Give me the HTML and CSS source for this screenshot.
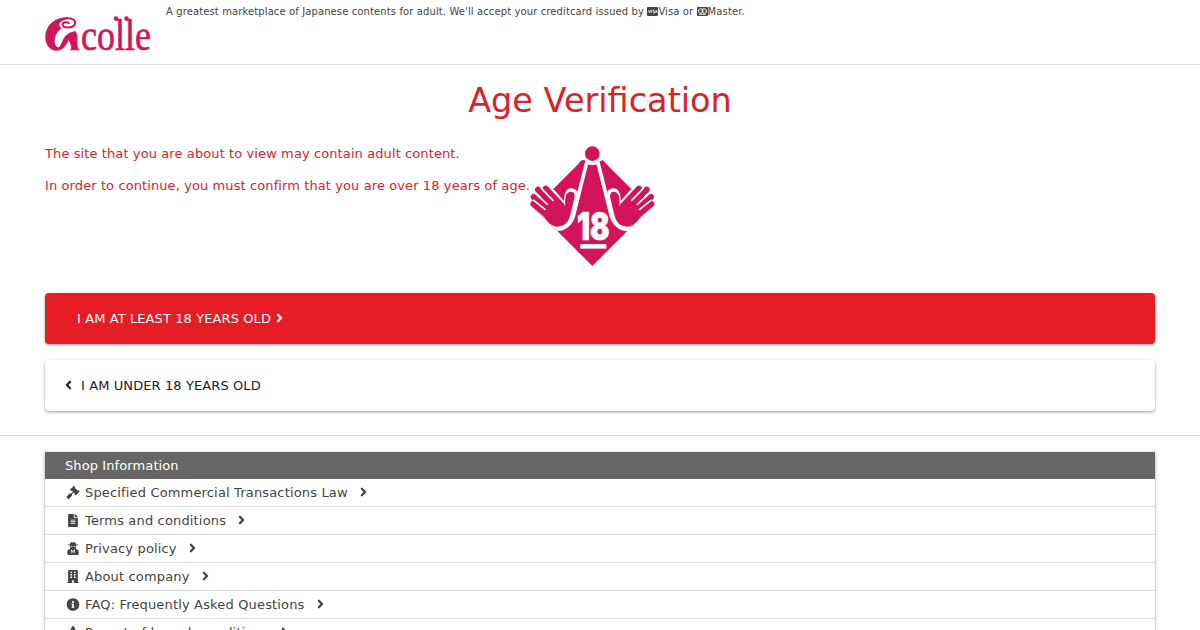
FILE: index.html
```html
<!DOCTYPE html>
<html lang="en">
<head>
    <meta charset="UTF-8">
    <meta name="viewport" content="width=device-width, initial-scale=1.0">
    <title>Age Verification</title>
    <link rel="stylesheet" href="styles.css">
</head>
<body>
    <svg class="defs" width="0" height="0">
        <symbol id="angle-right" viewBox="0 0 256 512">
            <path d="M224.3 273l-136 136c-9.4 9.4-24.6 9.4-33.9 0l-22.6-22.6c-9.4-9.4-9.4-24.6 0-33.9l96.4-96.4-96.4-96.4c-9.4-9.4-9.4-24.6 0-33.9L54.3 103c9.4-9.4 24.6-9.4 33.9 0l136 136c9.5 9.4 9.5 24.6.1 34z"/>
        </symbol>
    </svg>

    <header class="header">
        <div class="container header-inner">
            <a class="logo" href="#">
                <svg width="120" height="58" viewBox="0 -8 120 58">
                    <g transform="scale(.3333) translate(-15 -27)">
                        <path d="M84 37C40 36 16 66 16 96C16 120 30 137 50 137C68 137 76 124 86 106C90 114 94 122 94 130L89 136H120L115 130C108 118 118 96 107 79C90 80 76 90 69 104C62 118 60 129 53 127C41 120 42 100 50 86C54 78 60 74 66 70C50 62 58 46 84 43Z"/>
                        <path class="logo-swirl" d="M78 40C100 38 108 48 105 57C99 71 70 70 68 60C67 51 84 49 88 56"/>
                    </g>
                    <text x="36" y="36" textLength="70" lengthAdjust="spacingAndGlyphs">colle</text>
                    <circle cx="71" cy="4.500" r="2.200"/>
                    <circle cx="81.500" cy="4.500" r="2.200"/>
                </svg>
            </a>
            <p class="tagline">A greatest marketplace of Japanese contents for adult. We'll accept your creditcard issued by <svg class="card" viewBox="0 0 22 18"><rect width="22" height="18" rx="2"/><path class="card-line" d="M3 6l2 6 2-6M9 6v6M15 6h-3v3h3v3h-3M17 12l1.500-6 1.500 6"/></svg>Visa or <svg class="card" viewBox="0 0 22 18"><rect width="22" height="18" rx="2"/><circle class="card-ring" cx="7.500" cy="8" r="4.500"/><circle class="card-ring" cx="14.500" cy="8" r="4.500"/><path class="card-line" d="M4 15h14"/></svg>Master.</p>
        </div>
    </header>

    <main class="container">
        <h1 class="title">Age Verification</h1>
        <div class="notice">
            <div class="notice-text">
                <p>The site that you are about to view may contain adult content.</p>
                <p>In order to continue, you must confirm that you are over 18 years of age.</p>
            </div>
            <svg class="adult-mark" viewBox="30 15 375 369">
                <path class="pink" d="M217 30L391 204L217 378L43 204Z"/>
                <path class="white" d="M180 10H254V66L234 73L217 76L200 73L193 60L180 63Z"/>
                <circle class="pink" cx="217" cy="41" r="22"/>
                <path class="pink" d="M190 75L197 69Q194 60 185 61L175 71ZM244 75L237 69Q240 60 249 61L259 71Z"/>
                <g id="hand">
                    <path class="white" d="M20 120L103 150L132 183Q132 143 156 145Q166 146 172 154L165 212C158 250 142 273 112 273L43 204Z"/>
                    <path class="outline" d="M200 68L160 228Q148 264 117 265"/>
                    <path class="pink" d="M85 165L136 197Q132 155 153 155Q167 156 163 175L152 220Q145 260 111 260Q94 259 81 242L50 202L65 165Z"/>
                    <path class="finger" d="M40 192L82 227M41 171L90 216M54 149L108 203M77 146L124 196"/>
                    <path class="gap" d="M41 181L75 208M45 159L82 193M64 145L99 181"/>
                </g>
                <use href="#hand" transform="matrix(-1 0 0 1 434 0)"/>
                <text class="eighteen" x="171" y="301" textLength="98" lengthAdjust="spacingAndGlyphs">18</text>
                <path class="white" d="M181 312H259V326H181Z"/>
            </svg>
        </div>
        <a class="button button-enter" href="#">I AM AT LEAST 18 YEARS OLD <svg class="angle"><use href="#angle-right"/></svg></a>
        <a class="button button-leave" href="#"><svg class="angle angle-left"><use href="#angle-right"/></svg>I AM UNDER 18 YEARS OLD</a>
    </main>

    <footer class="footer">
        <div class="container">
            <div class="shop">
                <h2 class="shop-title">Shop Information</h2>
                <ul class="shop-list">
                    <li><svg class="icon" viewBox="0 0 512 512"><path d="M504.971 199.362l-22.627-22.627c-9.373-9.373-24.569-9.373-33.941 0l-5.657 5.657L329.608 69.255l5.657-5.657c9.373-9.373 9.373-24.569 0-33.941L312.638 7.029c-9.373-9.373-24.569-9.373-33.941 0L154.246 131.480c-9.373 9.373-9.373 24.569 0 33.941l22.627 22.627c9.373 9.373 24.569 9.373 33.941 0l5.657-5.657 39.598 39.598-81.040 81.040-5.657-5.657c-12.497-12.497-32.758-12.497-45.255 0L9.373 412.118c-12.497 12.497-12.497 32.758 0 45.255l45.255 45.255c12.497 12.497 32.758 12.497 45.255 0l114.745-114.745c12.497-12.497 12.497-32.758 0-45.255l-5.657-5.657 81.040-81.040 39.598 39.598-5.657 5.657c-9.373 9.373-9.373 24.569 0 33.941l22.627 22.627c9.373 9.373 24.569 9.373 33.941 0l124.451-124.451c9.372-9.372 9.372-24.568 0-33.941z"/></svg>Specified Commercial Transactions Law<svg class="angle"><use href="#angle-right"/></svg></li>
                    <li><svg class="icon" viewBox="0 0 384 512"><path d="M224 136V0H24C10.700 0 0 10.700 0 24v464c0 13.300 10.700 24 24 24h336c13.300 0 24-10.700 24-24V160H248c-13.200 0-24-10.800-24-24zm64 236c0 6.600-5.400 12-12 12H108c-6.600 0-12-5.400-12-12v-8c0-6.600 5.400-12 12-12h168c6.600 0 12 5.400 12 12v8zm0-64c0 6.600-5.400 12-12 12H108c-6.600 0-12-5.400-12-12v-8c0-6.600 5.400-12 12-12h168c6.600 0 12 5.400 12 12v8zm0-72v8c0 6.600-5.400 12-12 12H108c-6.600 0-12-5.400-12-12v-8c0-6.600 5.400-12 12-12h168c6.600 0 12 5.400 12 12zm96-114.100v6.100H256V0h6.100c6.400 0 12.500 2.500 17 7l97.900 98c4.500 4.500 7 10.600 7 16.900z"/></svg>Terms and conditions<svg class="angle"><use href="#angle-right"/></svg></li>
                    <li><svg class="icon" viewBox="0 0 448 512"><path fill-rule="evenodd" d="M96 96L135 15Q148-5 170 5L224 20L278 5Q300-5 313 15L352 96H410Q440 112 410 132H352V160Q352 200 330 230L350 288H384Q448 310 448 384V464Q448 512 400 512H48Q0 512 0 464V384Q0 310 64 288H98L118 230Q96 200 96 160V132H38Q8 112 38 96ZM128 160V190H205V160ZM243 160V190H320V160ZM140 310L180 470L212 370L190 310ZM308 310L268 470L236 370L258 310Z"/></svg>Privacy policy<svg class="angle"><use href="#angle-right"/></svg></li>
                    <li><svg class="icon" viewBox="0 0 448 512"><path fill-rule="evenodd" d="M32 24Q32 0 56 0H392Q416 0 416 24V476H436Q448 476 448 488V512H256V400H192V512H0V488Q0 476 12 476H32ZM120 64V120H188V64ZM260 64V120H328V64ZM120 160V216H188V160ZM260 160V216H328V160ZM120 256V312H188V256ZM260 256V312H328V256Z"/></svg>About company<svg class="angle"><use href="#angle-right"/></svg></li>
                    <li><svg class="icon" viewBox="0 0 512 512"><path d="M256 8C119.043 8 8 119.083 8 256c0 136.997 111.043 248 248 248s248-111.003 248-248C504 119.083 392.957 8 256 8zm0 110c23.196 0 42 18.804 42 42s-18.804 42-42 42-42-18.804-42-42 18.804-42 42-42zm56 254c0 6.627-5.373 12-12 12h-88c-6.627 0-12-5.373-12-12v-24c0-6.627 5.373-12 12-12h12v-64h-12c-6.627 0-12-5.373-12-12v-24c0-6.627 5.373-12 12-12h64c6.627 0 12 5.373 12 12v100h12c6.627 0 12 5.373 12 12v24z"/></svg>FAQ: Frequently Asked Questions<svg class="angle"><use href="#angle-right"/></svg></li>
                    <li><svg class="icon" viewBox="0 0 512 512"><path d="M256 0Q280 0 292 22L506 440Q520 490 470 490H42Q-8 490 6 440L220 22Q232 0 256 0Z"/></svg>Report of breach conditions<svg class="angle"><use href="#angle-right"/></svg></li>
                </ul>
            </div>
        </div>
    </footer>
</body>
</html>
```
FILE: styles.css
```css
* {
    box-sizing: border-box;
}

body {
    margin: 0;
    height: 630px;
    overflow: hidden;
    background-color: #fff;
    color: #444;
    font-family: "DejaVu Sans", sans-serif;
    font-size: 13px;
    letter-spacing: 0.1px;
}

.defs {
    display: block;
}

.container {
    width: 1110px;
    margin: 0 auto;
}

.header {
    height: 65px;
    border-bottom: 1px solid #ddd;
}

.header-inner {
    display: flex;
}

.logo {
    width: 121px;
    height: 64px;
    padding-top: 6px;
    fill: #d4145a;
}

.logo text {
    font-family: "Liberation Serif", serif;
    font-size: 45px;
    letter-spacing: 0;
    stroke: #d4145a;
    stroke-width: 0.7;
}

.logo-swirl {
    fill: none;
    stroke: #d4145a;
    stroke-width: 6;
}

.tagline {
    margin: 4px 0 0;
    font-size: 10px;
    line-height: 15px;
    letter-spacing: 0.11px;
}

.card {
    width: 11px;
    height: 9px;
    vertical-align: -1px;
    fill: #444;
}

.card-line {
    fill: none;
    stroke: #fff;
    stroke-width: 1.4;
}

.card-ring {
    fill: none;
    stroke: #fff;
    stroke-width: 2;
}

.title {
    margin: 0;
    padding-top: 16px;
    color: #d9232a;
    font-size: 33.5px;
    font-weight: normal;
    line-height: 40px;
    letter-spacing: 0;
    text-align: center;
}

.notice {
    display: flex;
    height: 148px;
    margin-top: 24px;
    color: #d0262d;
}

.notice-text {
    padding-top: 1px;
}

.notice p {
    margin: 0 0 16px;
    line-height: 16px;
}

.adult-mark {
    width: 125px;
    height: 123px;
}

.pink {
    fill: #d4145a;
}

.white {
    fill: #fff;
}

.outline {
    fill: none;
    stroke: #fff;
    stroke-width: 11;
}

.finger {
    fill: none;
    stroke: #d4145a;
    stroke-width: 18;
    stroke-linecap: round;
}

.gap {
    fill: none;
    stroke: #fff;
    stroke-width: 5;
    stroke-linecap: round;
}

.eighteen {
    fill: #fff;
    stroke: #fff;
    stroke-width: 2;
    font-family: Inter, sans-serif;
    font-size: 116px;
    font-weight: 900;
    letter-spacing: 0;
}

.button {
    display: flex;
    align-items: center;
    height: 51px;
    border-radius: 4px;
    box-shadow: 0 1px 3px rgba(0, 0, 0, 0.4);
    text-decoration: none;
}

.button-enter {
    padding-left: 32px;
    background-color: #e61d25;
    color: #fff;
}

.button-leave {
    margin-top: 16px;
    padding-left: 20px;
    color: #222;
}

.angle {
    width: 7px;
    height: 14px;
    margin-bottom: 1px;
    fill: currentColor;
}

.button-enter .angle {
    margin-left: 5px;
}

.angle-left {
    margin-right: 9px;
    transform: scaleX(-1);
}

.footer {
    margin-top: 24px;
    padding-top: 16px;
    border-top: 1px solid #ddd;
}

.shop {
    box-shadow: 0 1px 3px rgba(0, 0, 0, 0.4);
    letter-spacing: 0.16px;
}

.shop-title {
    margin: 0;
    padding-left: 20px;
    background-color: #666;
    color: #fff;
    font-size: 13px;
    font-weight: normal;
    line-height: 27px;
    letter-spacing: 0.1px;
}

.shop-list {
    margin: 0;
    padding: 0;
    list-style: none;
}

.shop-list li {
    display: flex;
    align-items: center;
    height: 28px;
    padding-left: 20px;
    border-bottom: 1px solid #ddd;
}

.shop-list .angle {
    margin-left: 12px;
}

.icon {
    width: 16px;
    height: 13px;
    margin-right: 4px;
    fill: #444;
}
```
